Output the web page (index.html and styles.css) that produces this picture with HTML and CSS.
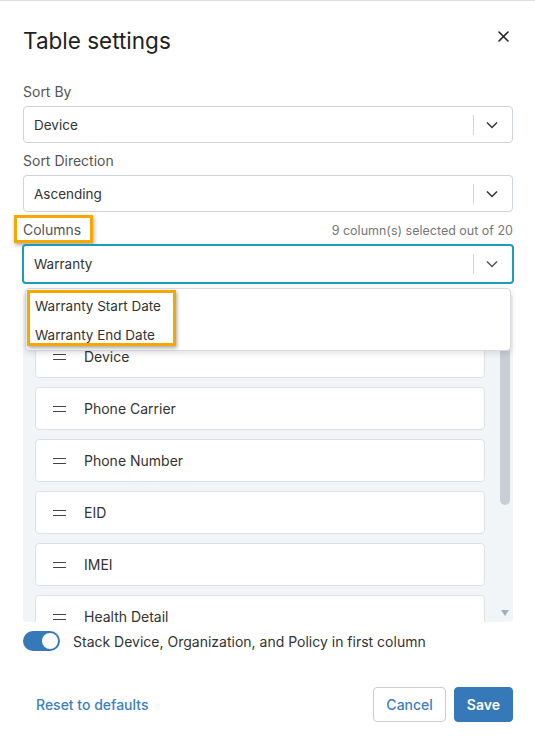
FILE: index.html
```html
<!DOCTYPE html>
<html lang="en">
<head>
    <meta charset="UTF-8">
    <meta name="viewport" content="width=device-width, initial-scale=1.0">
    <title>Table settings</title>
    <link rel="stylesheet" href="styles.css">
</head>
<body>
    <div class="modal">
        <header class="modal-header">
            <h1>Table settings</h1>
            <button class="close-btn" aria-label="Close">
                <svg width="11" height="11" viewBox="0 0 11 11"><path d="M1 1L10 10M10 1L1 10" stroke="#222" stroke-width="1.6" stroke-linecap="round"/></svg>
            </button>
        </header>

        <div class="field">
            <label class="field-label">Sort By</label>
            <div class="select">
                <span class="select-value">Device</span>
                <span class="select-sep"></span>
                <svg class="chevron" width="12" height="8" viewBox="0 0 12 8"><path d="M1 1.5L6 6.5L11 1.5" fill="none" stroke="#333" stroke-width="1.5"/></svg>
            </div>
        </div>

        <div class="field">
            <label class="field-label">Sort Direction</label>
            <div class="select">
                <span class="select-value">Ascending</span>
                <span class="select-sep"></span>
                <svg class="chevron" width="12" height="8" viewBox="0 0 12 8"><path d="M1 1.5L6 6.5L11 1.5" fill="none" stroke="#333" stroke-width="1.5"/></svg>
            </div>
        </div>

        <div class="field columns-field">
            <div class="label-row">
                <label class="field-label"><span class="marked">Columns</span></label>
                <span class="count">9 column(s) selected out of 20</span>
            </div>
            <div class="select focused">
                <span class="select-value">Warranty</span>
                <span class="select-sep"></span>
                <svg class="chevron" width="12" height="8" viewBox="0 0 12 8"><path d="M1 1.5L6 6.5L11 1.5" fill="none" stroke="#555" stroke-width="1.5"/></svg>

                <div class="menu">
                    <div class="menu-items">
                        <div class="menu-item">Warranty Start Date</div>
                        <div class="menu-item">Warranty End Date</div>
                    </div>
                </div>
            </div>

            <div class="column-list">
                <div class="cards">
                    <div class="card"><span class="grip"></span>Device</div>
                    <div class="card"><span class="grip"></span>Phone Carrier</div>
                    <div class="card"><span class="grip"></span>Phone Number</div>
                    <div class="card"><span class="grip"></span>EID</div>
                    <div class="card"><span class="grip"></span>IMEI</div>
                    <div class="card"><span class="grip"></span>Health Detail</div>
                </div>
                <div class="scrollbar">
                    <div class="thumb"></div>
                    <div class="arrow-down"></div>
                </div>
            </div>
        </div>

        <div class="toggle-row">
            <span class="toggle on"><span class="knob"></span></span>
            <span>Stack Device, Organization, and Policy in first column</span>
        </div>

        <footer class="modal-footer">
            <a class="link-btn" href="#">Reset to defaults</a>
            <div class="actions">
                <button class="btn btn-secondary">Cancel</button>
                <button class="btn btn-primary">Save</button>
            </div>
        </footer>
    </div>
</body>
</html>
```

FILE: styles.css
```css
body {
    margin: 0;
    font-family: Inter, "Noto Sans", sans-serif;
    color: #333;
    background-color: #fff;
    border-top: 1px solid #dde1e6;
}
.modal {
    padding: 0 22px 0 23px;
}
.modal-header {
    display: flex;
    justify-content: space-between;
    align-items: flex-start;
    padding-top: 25px;
}
h1 {
    margin: 0;
    font-size: 22.5px;
    font-weight: 400;
    line-height: 30px;
    color: #222;
}
.close-btn {
    background: none;
    border: none;
    padding: 0;
    margin: 4px 4px 0 0;
    cursor: pointer;
}
.field {
    margin-top: 8px;
}
.modal-header + .field {
    margin-top: 26px;
}
.field-label {
    display: block;
    font-size: 14px;
    line-height: 20px;
    color: #555;
    margin-bottom: 4px;
}
.label-row {
    display: flex;
    justify-content: space-between;
    align-items: baseline;
}
.count {
    font-size: 12.5px;
    color: #777;
}
.marked {
    position: relative;
}
/* orange callout boxes */
.marked::after,
.menu-items::after {
    content: "";
    position: absolute;
    border: 3px solid #f5a800;
    box-shadow: 1px 2px 4px rgba(0,0,0,0.35);
    pointer-events: none;
}
.marked::after {
    left: -9px;
    right: -12px;
    top: -6px;
    bottom: -5px;
}
.select {
    position: relative;
    display: flex;
    align-items: center;
    height: 37px;
    box-sizing: border-box;
    border: 1px solid #cfd4da;
    border-radius: 4px;
    padding: 0 14px 0 10px;
    font-size: 13.5px;
    color: #333;
    background-color: #fff;
}
.select.focused {
    height: 40px;
    border: 2px solid #1b9bbe;
    margin: 0 -1px;
    padding-left: 10px;
}
.select-value {
    flex: 1;
}
.select-sep {
    width: 1px;
    height: 20px;
    background-color: #d3d7dc;
    margin-right: 12px;
}
.menu {
    position: absolute;
    top: calc(100% + 6px);
    left: 1px;
    right: 1px;
    background-color: #fff;
    border: 1px solid #d6dadf;
    border-radius: 4px;
    box-shadow: 0 2px 6px rgba(0,0,0,0.12);
    z-index: 10;
}
.menu-items {
    position: relative;
    padding-top: 3px;
}
.menu-items::after {
    left: 1px;
    top: 1px;
    width: 143px;
    height: 50px;
}
.menu-item {
    height: 29px;
    line-height: 28px;
    padding-left: 9px;
    font-size: 13.5px;
    color: #333;
}
.column-list {
    display: flex;
    margin-top: 10px;
    height: 328px;
    background-color: #f2f5f8;
    border-radius: 4px;
    overflow: hidden;
}
.cards {
    flex: 1;
    display: flex;
    flex-direction: column;
    gap: 9px;
    padding: 41px 0 0 12px;
}
.card {
    flex-shrink: 0;
    display: flex;
    align-items: center;
    height: 43px;
    box-sizing: border-box;
    background-color: #fff;
    border: 1px solid #dde1e6;
    border-radius: 4px;
    padding-left: 17px;
    font-size: 14px;
    color: #333;
}
.grip {
    width: 13px;
    height: 6px;
    border-top: 1.5px solid #444;
    border-bottom: 1.5px solid #444;
    box-sizing: border-box;
    margin-right: 18px;
}
.scrollbar {
    width: 10px;
    margin: 0 3px 0 15px;
    display: flex;
    flex-direction: column;
    justify-content: space-between;
    align-items: center;
}
.thumb {
    width: 100%;
    height: 211px;
    background-color: #c9cdd4;
    border-radius: 0 0 5px 5px;
}
.arrow-down {
    width: 0;
    height: 0;
    border-left: 4.5px solid transparent;
    border-right: 4.5px solid transparent;
    border-top: 6px solid #a9aeb6;
    margin-bottom: 6px;
}
.toggle-row {
    display: flex;
    align-items: center;
    gap: 13px;
    margin-top: 9px;
    font-size: 14px;
    color: #333;
}
.toggle {
    display: flex;
    align-items: center;
    justify-content: flex-end;
    width: 37px;
    height: 20px;
    box-sizing: border-box;
    padding: 2px;
    border-radius: 10px;
    background-color: #3579b8;
}
.knob {
    width: 16px;
    height: 16px;
    border-radius: 50%;
    background-color: #fff;
}
.modal-footer {
    display: flex;
    justify-content: space-between;
    align-items: center;
    margin-top: 36px;
}
.link-btn {
    margin-left: 13px;
    font-size: 14px;
    font-weight: 500;
    color: #3b7fc2;
    text-decoration: none;
}
.actions {
    display: flex;
    gap: 8px;
}
.btn {
    height: 35px;
    padding: 0 12px;
    border-radius: 4px;
    font-family: inherit;
    font-size: 14px;
    font-weight: 500;
    cursor: pointer;
}
.btn-secondary {
    background-color: #fff;
    border: 1px solid #c9ced4;
    color: #3b7fc2;
}
.btn-primary {
    background-color: #3579b8;
    border: 1px solid #3579b8;
    color: #fff;
    font-weight: 600;
}
```
